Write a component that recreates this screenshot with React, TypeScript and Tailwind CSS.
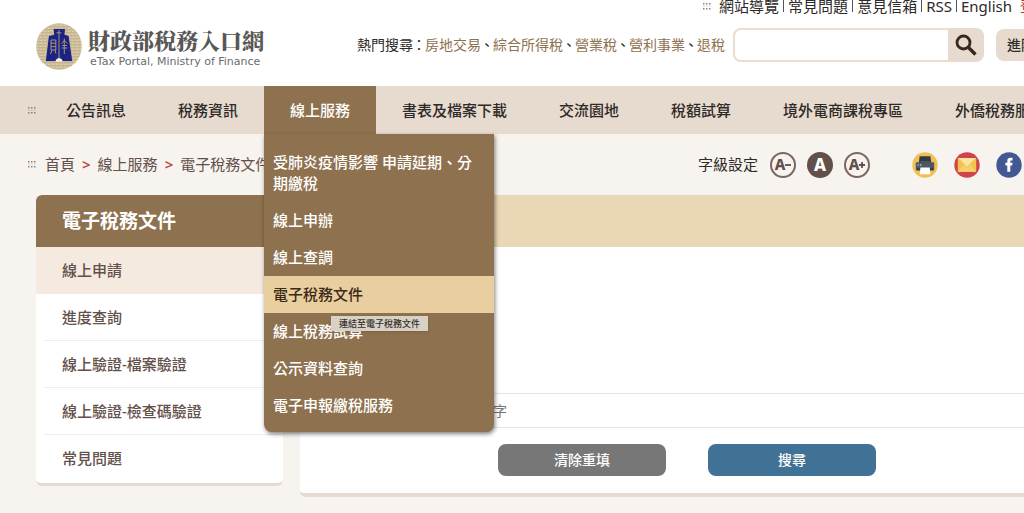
import React from "react";

const navItems = ["公告訊息", "稅務資訊", "線上服務", "書表及檔案下載", "交流園地", "稅額試算", "境外電商課稅專區", "外僑稅務服務"];
const serviceLinks = [
  "受肺炎疫情影響 申請延期、分期繳稅",
  "線上申辦",
  "線上查調",
  "電子稅務文件",
  "線上稅務試算",
  "公示資料查詢",
  "電子申報繳稅服務",
];
const sideLinks = ["線上申請", "進度查詢", "線上驗證-檔案驗證", "線上驗證-檢查碼驗證", "常見問題"];
const topLinks = ["網站導覽", "常見問題", "意見信箱", "RSS", "English"];
const hotWords = ["房地交易", "綜合所得稅", "營業稅", "營利事業", "退稅"];

function AccessKey() {
  return (
    <a href="#access" aria-label="定位點" className="block w-2 shrink-0">
      <svg viewBox="0 0 8 7" className="h-[7px] w-2" fill="#8d8078">
        {[0, 3, 6].map((x) =>
          [0, 5].map((y) => <rect key={`${x}-${y}`} x={x} y={y} width="1.5" height="1.5" />)
        )}
        {[0, 3, 6].map((x) => (
          <rect key={x} x={x} y="2.6" width="1.5" height="1" opacity="0.45" />
        ))}
      </svg>
    </a>
  );
}

function Emblem() {
  return (
    <svg viewBox="0 0 46 47" className="h-[47px] w-[46px] shrink-0" aria-hidden="true">
      <defs>
        <pattern id="weave" width="4" height="3" patternUnits="userSpaceOnUse">
          <rect width="4" height="3" fill="#cfbf9c" />
          <rect width="4" height="1" fill="#c4b38d" />
          <rect y="2" width="2" height="1" fill="#dacdb0" />
        </pattern>
      </defs>
      <ellipse cx="23" cy="23.5" rx="22.8" ry="23.3" fill="url(#weave)" />
      <path d="M17 5.500h12.500l-.6 6 4.100 1 3.800 26H26.300c0-4-6.500-4-6.500 0H9.300l3.200-26 5.200-1z" fill="#1d2384" stroke="#dccb98" strokeWidth="0.8" />
      <g fill="none" stroke="#b5a174" strokeWidth="0.9">
        <path d="M23 7v28M20.500 9.800h5" />
        <path d="M15 17h4.800v10H15zM15 20.200h4.800M15 23.600h4.800M16 27l-1.500 4M19 27l.8 3.500" />
        <path d="M28.300 15.500v15.500M25.800 20.500l2.500-3 3 3M25.600 25h5.800M26.200 22.500h4.600" />
      </g>
      <path d="M20.600 36.800c.9-1.600 4-1.600 5 0l.8 1.800h-6.600z" fill="#fbf8ef" />
    </svg>
  );
}

function PrinterIcon() {
  return (
    <svg viewBox="0 0 26 26" className="size-[26px]" aria-hidden="true">
      <circle cx="13" cy="13" r="12.7" fill="#f2bf56" />
      <path d="M7.600 4.200h10.800l1 7.500H6.800z" fill="#343a42" />
      <path d="M8.500 9.500h9.200" stroke="#555e69" strokeWidth="0.8" />
      <rect x="3.800" y="10.200" width="18.400" height="8" rx="1" fill="#4e5865" />
      <rect x="4.500" y="16" width="17" height="2.400" fill="#394049" />
      <rect x="5.500" y="12.200" width="1.600" height="1.500" fill="#5fb7d6" />
      <rect x="8" y="12.200" width="1.400" height="1.500" fill="#8ed0e2" />
      <path d="M8.400 15.600h9.300l.7 6.600H7.800z" fill="#fff" />
    </svg>
  );
}

function MailIcon() {
  return (
    <svg viewBox="0 0 26 26" className="size-[26px]" aria-hidden="true">
      <circle cx="13" cy="13" r="12.7" fill="#cf434b" />
      <rect x="3.800" y="6" width="18.400" height="13.800" fill="#f2c14f" />
      <path d="M3.800 19.800 10.500 12h5l6.700 7.800z" fill="#f6d06d" />
      <path d="M3.800 6h18.400L13 15.200z" fill="#fbe59b" />
      <path d="M3.800 6 13 15.200 22.200 6" fill="none" stroke="#e5b04a" strokeWidth="0.6" />
    </svg>
  );
}

function FacebookIcon() {
  return (
    <svg viewBox="0 0 26 26" className="size-[26px]" aria-hidden="true">
      <circle cx="13" cy="13" r="12.7" fill="#425893" />
      <path d="M11.300 19.800v-6.400H9.400v-2.700h1.900V9c0-2 1.200-3.200 3.200-3.200h2v2.600h-1.200c-.8 0-1 .4-1 1v1.300h2.200l-.3 2.700h-1.900v6.400z" fill="#fff" />
    </svg>
  );
}

function SizeButton({ sign, active, label }: { sign?: string; active?: boolean; label: string }) {
  return (
    <button
      type="button"
      aria-label={label}
      className={
        active
          ? "flex size-[26px] items-center justify-center rounded-full bg-[#63504a] text-[17px] leading-none font-extrabold text-white"
          : "flex size-[26px] items-center justify-center rounded-full border-2 border-[#7b6660] text-[15px] leading-none font-extrabold text-[#63504a]"
      }
    >
      <span>A</span>
      {sign && (
        <svg viewBox="0 0 6 6" className="size-[6px] shrink-0" aria-hidden="true">
          <path d={sign} stroke="currentColor" strokeWidth="1.800" fill="none" />
        </svg>
      )}
    </button>
  );
}

export default function App() {
  return (
    <div className="min-h-screen overflow-hidden bg-[#f7f3ef] font-['Noto_Sans','Noto_Sans_CJK_TC',sans-serif] text-[15px] text-[#2e2a28]">
      <div className="min-w-[1110px]">
        <header className="flex justify-between bg-white px-9 pb-4">
          <a href="#home" className="flex items-start gap-[6px] pt-[23px]">
            <Emblem />
            <span className="flex flex-col pt-[5px] text-[#595756]">
              <span className="font-['Noto_Serif_CJK_TC','Noto_Sans_CJK_TC',serif] text-[22px] leading-6 font-black">財政部稅務入口網</span>
              <span className="pt-1 pl-[2px] font-['DejaVu_Sans',sans-serif] text-[11px] leading-3 text-[#6b6b6b]">eTax Portal, Ministry of Finance</span>
            </span>
          </a>
          <div className="flex flex-col items-end">
            <div className="flex h-3 items-center pr-6 whitespace-nowrap">
              <AccessKey />
              <ul className="flex items-center pl-2 leading-3">
                {topLinks.map((t, i) => (
                  <li key={t} className="flex items-center">
                    {i > 0 && <span className="mx-1 h-3 w-px bg-[#555]" />}
                    <a href="#top">{t}</a>
                  </li>
                ))}
              </ul>
              <a href="#login" className="pl-2 text-[#b8353a]">登入</a>
            </div>
            <div className="flex items-center pt-4">
              <div className="flex text-sm whitespace-nowrap">
                <span>熱門搜尋</span>
                <span className="flex w-3 justify-center">：</span>
                {hotWords.map((w, i) => (
                  <React.Fragment key={w}>
                    {i > 0 && <span className="flex w-3 justify-center">、</span>}
                    <a href="#hot" className="text-[#8e714e]">{w}</a>
                  </React.Fragment>
                ))}
              </div>
              <form className="ml-2 flex h-[34px] w-[251px] overflow-hidden rounded-lg bg-[#e7dace]" onSubmit={(e) => e.preventDefault()}>
                <input aria-label="搜尋" className="min-w-0 flex-1 rounded-l-lg border-2 border-r-0 border-[#e9decf] bg-white px-2 outline-none" />
                <button type="submit" aria-label="送出搜尋" className="flex w-9 items-center justify-center">
                  <svg viewBox="0 0 22 22" className="size-[22px]" fill="none" stroke="#38271a" aria-hidden="true">
                    <circle cx="8.500" cy="8.500" r="6.500" strokeWidth="2.800" />
                    <path d="m13.500 13.500 7 7" strokeWidth="3.400" />
                  </svg>
                </button>
              </form>
              <a href="#advanced" className="ml-3 flex h-8 items-center rounded-lg bg-[#e7dace] px-[11px] text-sm font-medium whitespace-nowrap">進階搜尋</a>
            </div>
          </div>
        </header>

        <nav className="flex h-12 items-center bg-[#e7dace] pl-7 whitespace-nowrap" aria-label="主選單">
          <AccessKey />
          <ul className="flex h-12 pl-1">
            {navItems.map((t) =>
              t === "線上服務" ? (
                <li key={t} className="relative">
                  <a href="#nav" className="flex h-12 items-center bg-[#8e714e] px-[26px] font-medium text-white">{t}</a>
                  <ul className="absolute top-12 left-0 z-10 w-[230px] rounded-b-lg bg-[#8e714e] pt-[10px] pb-2 font-medium whitespace-normal text-white shadow-[1px_2px_4px_rgba(0,0,0,0.5)]">
                    {serviceLinks.map((s) => (
                      <li key={s} className="relative">
                        <a
                          href="#service"
                          className={
                            s === "電子稅務文件"
                              ? "block bg-[#e9cf9f] px-[9px] py-2 leading-[21px] text-[#3b2a17]"
                              : "block px-[9px] py-2 leading-[21px]"
                          }
                        >
                          {s}
                        </a>
                        {s === "電子稅務文件" && (
                          <span role="tooltip" className="absolute top-10 left-[67px] z-20 bg-[#d9d1c6] px-2 text-[9px] leading-[15px] whitespace-nowrap text-[#33302d] shadow-sm">
                            連結至電子稅務文件
                          </span>
                        )}
                      </li>
                    ))}
                  </ul>
                </li>
              ) : (
                <li key={t}>
                  <a href="#nav" className="flex h-12 items-center px-[26px] font-medium">{t}</a>
                </li>
              )
            )}
          </ul>
        </nav>

        <div className="flex h-[61px] items-center justify-between pr-[88px] pl-7">
          <div className="flex items-center">
            <AccessKey />
            <ol className="flex items-center gap-[7px] pl-[9px] text-[#63504a]">
              <li><a href="#home">首頁</a></li>
              <li className="font-semibold text-[#b8473f]">&gt;</li>
              <li><a href="#service">線上服務</a></li>
              <li className="font-semibold text-[#b8473f]">&gt;</li>
              <li>電子稅務文件</li>
            </ol>
          </div>
          <div className="flex items-center">
            <span>字級設定</span>
            <div className="flex gap-[11px] pl-3">
              <SizeButton label="小" sign="M0 3h6" />
              <SizeButton label="中" active />
              <SizeButton label="大" sign="M0 3h6M3 0v6" />
            </div>
            <div className="flex gap-4 pl-[42px]">
              <button type="button" aria-label="列印"><PrinterIcon /></button>
              <button type="button" aria-label="轉寄"><MailIcon /></button>
              <a href="#facebook" aria-label="Facebook"><FacebookIcon /></a>
            </div>
          </div>
        </div>

        <div className="flex items-start gap-[17px] px-9">
          <aside className="w-[247px] shrink-0 overflow-hidden rounded-md border-b-3 border-[#e7dace] bg-white">
            <h2 className="flex h-[52px] items-center bg-[#8e714e] px-[26px] text-[19px] font-bold text-white">電子稅務文件</h2>
            <ul className="pb-[2px] font-medium text-[#63504a]">
              {sideLinks.map((t, i) =>
                i === 0 ? (
                  <li key={t} className="bg-[#f4eadf]">
                    <a href="#side" className="flex h-[47px] items-center px-[26px]">{t}</a>
                  </li>
                ) : (
                  <li key={t} className="ml-2 border-b border-[#f5ede2] last:border-b-0">
                    <a href="#side" className="flex h-[46px] items-center px-[18px]">{t}</a>
                  </li>
                )
              )}
            </ul>
          </aside>

          <main className="flex-1 overflow-hidden rounded-md border-b-4 border-[#e7dace] bg-white">
            <div className="h-[52px] bg-[#ead7b6]" />
            <form className="px-9 pt-[146px] pb-[17px]" onSubmit={(e) => e.preventDefault()}>
              <input
                aria-label="關鍵字"
                placeholder="請輸入關鍵字"
                className="block h-[35px] w-full rounded border border-[#ece2d6] bg-white pl-[86px] text-sm outline-none placeholder:text-[#757575]"
              />
              <div className="flex justify-center gap-[42px] pt-4 text-sm font-medium text-white">
                <button type="reset" className="h-8 w-[168px] rounded-lg bg-[#777]">清除重填</button>
                <button type="submit" className="h-8 w-[168px] rounded-lg bg-[#3f7295]">搜尋</button>
              </div>
            </form>
          </main>
        </div>
      </div>
    </div>
  );
}
